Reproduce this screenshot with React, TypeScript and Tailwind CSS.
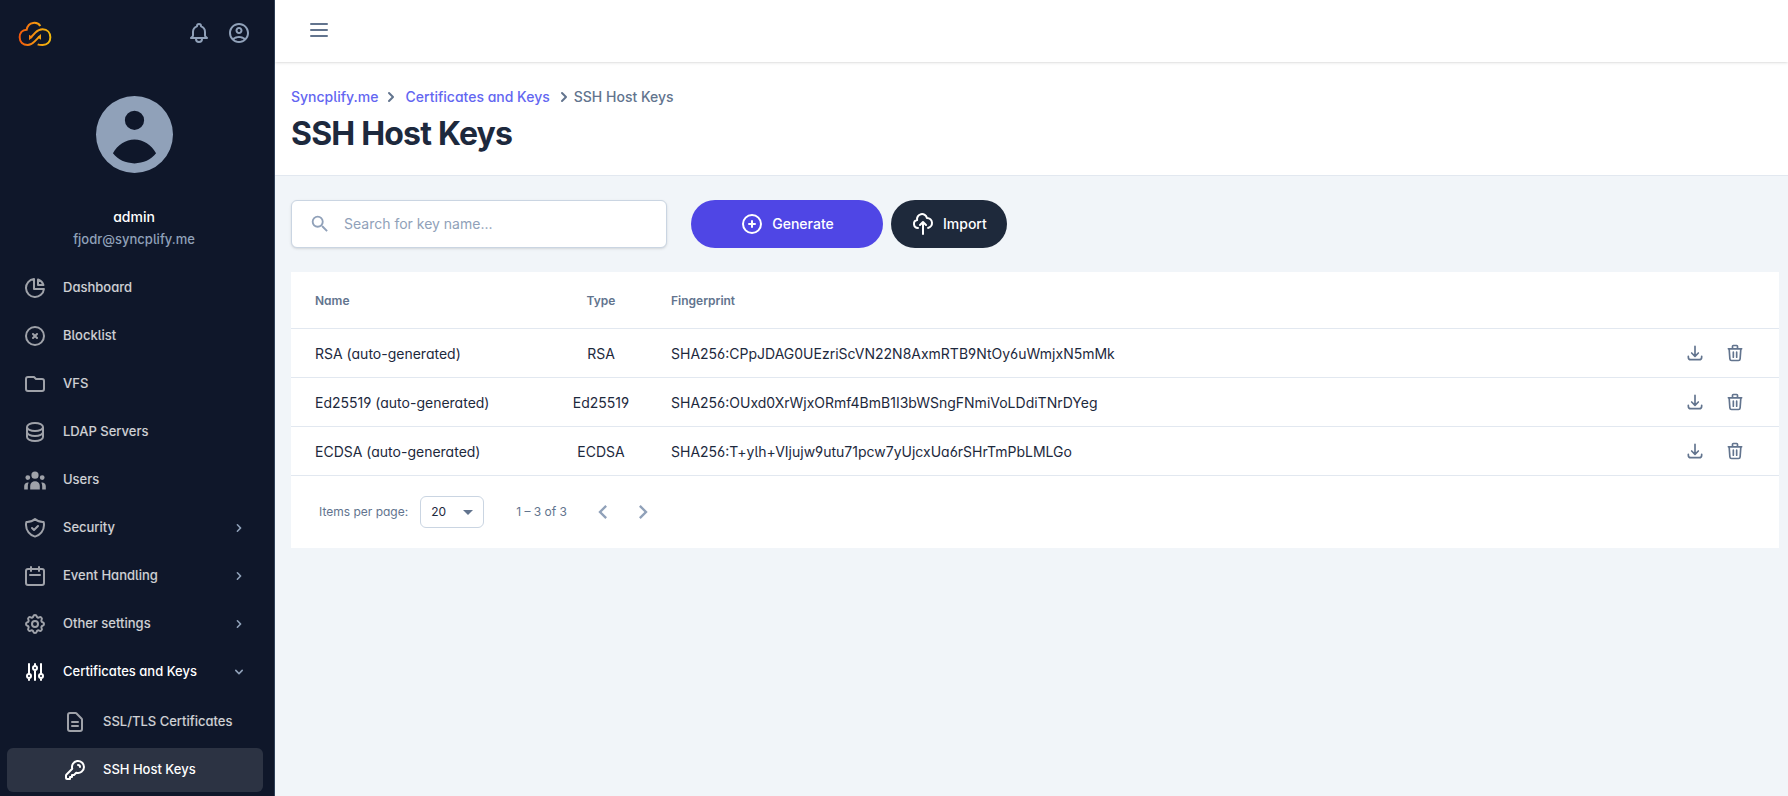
import type { ReactNode } from "react"
import type { IconType } from "react-icons"
import {
  HiChevronDown, HiChevronRight, HiOutlineAdjustments, HiOutlineBell, HiOutlineCalendar,
  HiOutlineChartPie, HiOutlineCloudUpload, HiOutlineCog, HiOutlineDatabase,
  HiOutlineDocumentText, HiOutlineDownload, HiOutlineFolder, HiOutlineKey, HiOutlineMenu,
  HiOutlinePlusCircle, HiOutlineShieldCheck, HiOutlineTrash, HiOutlineXCircle, HiUserGroup,
} from "react-icons/hi"
import { MdArrowDropDown, MdChevronLeft, MdChevronRight, MdOutlineAccountCircle, MdSearch } from "react-icons/md"

type NavEntry = {
  label: string
  icon: IconType
  expandable?: boolean
  open?: boolean
  children?: { label: string; icon: IconType; active?: boolean }[]
}

const nav: NavEntry[] = [
  { label: "Dashboard", icon: HiOutlineChartPie },
  { label: "Blocklist", icon: HiOutlineXCircle },
  { label: "VFS", icon: HiOutlineFolder },
  { label: "LDAP Servers", icon: HiOutlineDatabase },
  { label: "Users", icon: HiUserGroup },
  { label: "Security", icon: HiOutlineShieldCheck, expandable: true },
  { label: "Event Handling", icon: HiOutlineCalendar, expandable: true },
  { label: "Other settings", icon: HiOutlineCog, expandable: true },
  {
    label: "Certificates and Keys",
    icon: HiOutlineAdjustments,
    expandable: true,
    open: true,
    children: [
      { label: "SSL/TLS Certificates", icon: HiOutlineDocumentText },
      { label: "SSH Host Keys", icon: HiOutlineKey, active: true },
    ],
  },
]

const keys = [
  { name: "RSA (auto-generated)", type: "RSA", fingerprint: "SHA256:CPpJDAG0UEzriScVN22N8AxmRTB9NtOy6uWmjxN5mMk" },
  { name: "Ed25519 (auto-generated)", type: "Ed25519", fingerprint: "SHA256:OUxd0XrWjxORmf4BmB1I3bWSngFNmiVoLDdiTNrDYeg" },
  { name: "ECDSA (auto-generated)", type: "ECDSA", fingerprint: "SHA256:T+ylh+VIjujw9utu71pcw7yUjcxUa6rSHrTmPbLMLGo" },
]

function Logo() {
  return (
    <svg viewBox="54 63 102 78" className="mt-0.5 h-[26px] w-[34px]" fill="none" strokeWidth="6" role="img" aria-label="Syncplify.me">
      <defs>
        <linearGradient id="logo" gradientUnits="userSpaceOnUse" x1="58" y1="0" x2="152" y2="0">
          <stop offset="0" stopColor="#f4580b" />
          <stop offset="0.5" stopColor="#f59410" />
          <stop offset="1" stopColor="#f2b90c" />
        </linearGradient>
      </defs>
      <g stroke="url(#logo)">
        <path d="M121 78C113 65 85 63 80 89C66 89 59 99 59 112C59 126 69 135 83 135C93 135 98 130 104 124L119 109" />
        <path d="M113 133C117 135 122 135 128 135C142 135 151 126 151 112C151 98 142 88 128 88C118 88 112 92 106 98L91 114" />
      </g>
      <path d="M87 104V121L98 111ZM123 119V102L112 112Z" fill="url(#logo)" />
    </svg>
  )
}

function Avatar() {
  return (
    <svg viewBox="2 2 20 20" className="size-[77px] text-slate-400" fill="currentColor" aria-hidden="true">
      <path
        fillRule="evenodd"
        d="M12 2a10 10 0 1 0 0 20a10 10 0 0 0 0-20ZM12 5.8a2.5 2.5 0 1 1 0 5a2.5 2.5 0 0 1 0-5ZM6.4 16.9C7.6 14.7 9.7 13.3 12 13.3s4.400 1.400 5.600 3.600C16.300 18.600 14.300 19.500 12 19.500s-4.300-.9-5.600-2.600Z"
      />
    </svg>
  )
}

function IconButton({ label, children }: { label: string; children: ReactNode }) {
  return (
    <button type="button" aria-label={label} className="flex size-10 items-center justify-center">
      {children}
    </button>
  )
}

function Sidebar() {
  return (
    <aside className="w-[275px] shrink-0 border-r border-slate-700 bg-[#0f172a] font-medium text-white">
      <div className="flex h-[66px] items-center pr-[15px] pl-[18px]">
        <Logo />
        <div className="ml-auto flex text-slate-400">
          <IconButton label="Notifications"><HiOutlineBell className="size-6" /></IconButton>
          <IconButton label="Account"><MdOutlineAccountCircle className="size-6" /></IconButton>
        </div>
      </div>

      <div className="flex flex-col items-center pt-[30px] pr-1.5">
        <Avatar />
        <p className="mt-8 text-sm leading-6">admin</p>
        <p className="text-[13px] leading-5 text-slate-400">fjodr@syncplify.me</p>
      </div>

      <nav className="mt-[17px] pr-[11px] pl-[7px] text-[13px]">
        <ul className="space-y-1">
          {nav.map((item) => (
            <li key={item.label}>
              <a
                href="#"
                className={`flex h-11 items-center rounded-md px-4 ${item.open ? "text-white" : "text-white/80"}`}
              >
                <item.icon className={`mr-4 size-6 ${item.open ? "" : "opacity-75"}`} />
                {item.label}
                {item.expandable &&
                  (item.open ? (
                    <HiChevronDown className="ml-auto size-4 text-slate-400" />
                  ) : (
                    <HiChevronRight className="ml-auto size-4 text-slate-400" />
                  ))}
              </a>
              {item.children && (
                <ul className="mt-[6px] space-y-1">
                  {item.children.map((child) => (
                    <li key={child.label}>
                      <a
                        href="#"
                        className={`flex h-11 items-center rounded-md pr-4 pl-14 ${child.active ? "bg-white/12 text-white" : "text-white/80"}`}
                      >
                        <child.icon className={`mr-4 size-6 ${child.active ? "" : "opacity-75"}`} />
                        {child.label}
                      </a>
                    </li>
                  ))}
                </ul>
              )}
            </li>
          ))}
        </ul>
      </nav>
    </aside>
  )
}

function KeysTable() {
  return (
    <div className="mt-6 bg-white">
      <table className="w-full table-fixed text-left text-sm">
        <colgroup>
          <col className="w-64" />
          <col className="w-[108px]" />
          <col />
          <col className="w-32" />
        </colgroup>
        <thead className="text-xs text-slate-500">
          <tr className="h-14 border-b border-slate-200">
            <th className="pt-0.5 pl-6 font-semibold">Name</th>
            <th className="pt-0.5 text-center font-semibold">Type</th>
            <th className="pt-0.5 pl-4 font-semibold">Fingerprint</th>
            <th />
          </tr>
        </thead>
        <tbody>
          {keys.map((k) => (
            <tr key={k.name} className="h-[49px] border-b border-slate-200">
              <td className="pt-0.5 pl-6">{k.name}</td>
              <td className="pt-0.5 text-center">{k.type}</td>
              <td className="pt-0.5 pl-4">{k.fingerprint}</td>
              <td className="pr-6">
                <div className="flex justify-end text-slate-500">
                  <IconButton label="Download"><HiOutlineDownload className="size-5" /></IconButton>
                  <IconButton label="Delete"><HiOutlineTrash className="size-5" /></IconButton>
                </div>
              </td>
            </tr>
          ))}
        </tbody>
      </table>

      <div className="flex h-[72px] items-center pl-7 text-xs text-slate-500">
        <label htmlFor="page-size">Items per page:</label>
        <div className="relative mr-8 ml-3">
          <select
            id="page-size"
            defaultValue="20"
            className="h-8 w-16 appearance-none rounded-md border border-slate-300 bg-white pl-[10px] text-slate-800"
          >
            <option>10</option>
            <option>20</option>
            <option>50</option>
          </select>
          <MdArrowDropDown className="pointer-events-none absolute top-1 right-1 size-6" />
        </div>
        1 – 3 of 3
        <div className="ml-4 flex text-slate-400">
          <IconButton label="Previous page"><MdChevronLeft className="size-7" /></IconButton>
          <IconButton label="Next page"><MdChevronRight className="size-7" /></IconButton>
        </div>
      </div>
    </div>
  )
}

export default function App() {
  return (
    <div className="flex min-h-screen bg-slate-100 font-[Inter,sans-serif] text-slate-800 [font-feature-settings:'cv03','cv04','cv05','cv11']">
      <Sidebar />

      <main className="min-w-0 flex-1">
        <header className="relative flex h-[62px] items-center bg-white px-6 pb-0.5 text-slate-500 shadow">
          <IconButton label="Toggle navigation"><HiOutlineMenu className="size-6" /></IconButton>
        </header>

        <div className="border-b border-slate-200 bg-white px-4 pt-6 pb-5">
          <nav className="flex items-center text-sm leading-[22px] font-medium">
            <a href="#" className="text-[#6366f1]">Syncplify.me</a>
            <HiChevronRight className="mr-1 ml-[3px] size-5 text-slate-500" />
            <a href="#" className="text-[#6366f1]">Certificates and Keys</a>
            <HiChevronRight className="ml-1 size-5 text-slate-500" />
            <span className="text-slate-500">SSH Host Keys</span>
          </nav>
          <h1 className="mt-[5px] text-[32px] leading-[42px] font-bold tracking-tight">SSH Host Keys</h1>
        </div>

        <div className="pt-6 pr-[9px] pl-4">
          <div className="flex items-center">
            <label className="flex h-12 w-[376px] items-center rounded-md border border-slate-300 bg-white px-[17px] shadow-sm">
              <MdSearch className="mr-[13px] size-[22px] text-slate-400" />
              <input
                type="text"
                aria-label="Search"
                placeholder="Search for key name..."
                className="min-w-0 flex-1 text-sm outline-none [font-feature-settings:normal] placeholder:text-slate-400"
              />
            </label>
            <button
              type="button"
              className="ml-6 flex h-12 w-48 items-center justify-center rounded-full bg-[#4f46e5] text-sm font-medium text-white [font-feature-settings:normal]"
            >
              <HiOutlinePlusCircle className="mr-2 size-6" />
              Generate
            </button>
            <button
              type="button"
              className="ml-2 flex h-12 items-center rounded-full bg-[#1e293b] px-5 text-sm font-medium text-white [font-feature-settings:normal]"
            >
              <HiOutlineCloudUpload className="mr-2 size-6" />
              Import
            </button>
          </div>

          <KeysTable />
        </div>
      </main>
    </div>
  )
}
